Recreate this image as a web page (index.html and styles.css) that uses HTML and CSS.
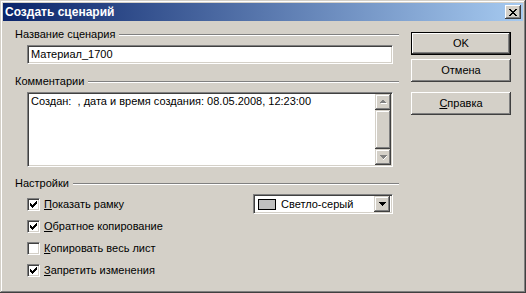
FILE: index.html
```html
<!DOCTYPE html>
<html lang="ru">
<head>
    <meta charset="UTF-8">
    <title>Создать сценарий</title>
    <link rel="stylesheet" href="styles.css">
</head>
<body>
    <div class="window">
        <div class="titlebar">
            <span class="title">Создать сценарий</span>
            <div class="close">
                <svg width="8" height="7" viewBox="0 0 8 7" shape-rendering="crispEdges">
                    <path d="M0 0h2v1H0zM6 0h2v1H6zM1 1h2v1H1zM5 1h2v1H5zM2 2h4v1H2zM3 3h2v1H3zM2 4h4v1H2zM1 5h2v1H1zM5 5h2v1H5zM0 6h2v1H0zM6 6h2v1H6z" fill="#000"/>
                </svg>
            </div>
        </div>

        <div class="content">
            <div class="main">
                <div class="group-head"><span>Название сценария</span><i class="rule"></i></div>
                <div class="edit">Материал_1700</div>

                <div class="group-head second"><span>Комментарии</span><i class="rule"></i></div>
                <div class="memo">
                    <div class="memo-text">Создан:  , дата и время создания: 08.05.2008, 12:23:00</div>
                    <div class="vscroll">
                        <div class="sbtn">
                            <svg width="7" height="5" viewBox="0 0 7 5" shape-rendering="crispEdges">
                                <path d="M4 1h1v1h1v1h1v1H1V3h1V2h1V1z" fill="#fff"/>
                                <path d="M3 0h1v1h1v1h1v1H0V2h1V1h1V0z" fill="#808080"/>
                            </svg>
                        </div>
                        <div class="sthumb"></div>
                        <div class="sbtn">
                            <svg width="7" height="5" viewBox="0 0 7 5" shape-rendering="crispEdges">
                                <path d="M1 1h6v1H6v1H5v1H4v1H3V1z" fill="#fff"/>
                                <path d="M0 0h7v1H6v1H5v1H4v1H3V3H2V2H1V1H0z" fill="#808080"/>
                            </svg>
                        </div>
                    </div>
                </div>

                <div class="group-head third"><span>Настройки</span><i class="rule"></i></div>
                <div class="options">
                    <div class="opt-row first">
                        <div class="check">
                            <span class="box">
                                <svg width="7" height="7" viewBox="0 0 7 7" shape-rendering="crispEdges"><path d="M0 2h1v3H0zM1 3h1v3H1zM2 4h1v3H2zM3 3h1v3H3zM4 2h1v3H4zM5 1h1v3H5zM6 0h1v3H6z" fill="#000"/></svg>
                            </span>
                            <span><u>П</u>оказать рамку</span>
                        </div>
                        <div class="combo">
                            <span class="swatch"></span>
                            <span class="combo-text">Светло-серый</span>
                            <span class="combo-btn">
                                <svg width="7" height="4" viewBox="0 0 7 4" shape-rendering="crispEdges"><path d="M0 0h7v1H6v1H5v1H4v1H3V3H2V2H1V1H0z" fill="#000"/></svg>
                            </span>
                        </div>
                    </div>
                    <div class="opt-row">
                        <div class="check">
                            <span class="box">
                                <svg width="7" height="7" viewBox="0 0 7 7" shape-rendering="crispEdges"><path d="M0 2h1v3H0zM1 3h1v3H1zM2 4h1v3H2zM3 3h1v3H3zM4 2h1v3H4zM5 1h1v3H5zM6 0h1v3H6z" fill="#000"/></svg>
                            </span>
                            <span><u>О</u>братное копирование</span>
                        </div>
                    </div>
                    <div class="opt-row">
                        <div class="check">
                            <span class="box"></span>
                            <span><u>К</u>опировать весь лист</span>
                        </div>
                    </div>
                    <div class="opt-row">
                        <div class="check">
                            <span class="box">
                                <svg width="7" height="7" viewBox="0 0 7 7" shape-rendering="crispEdges"><path d="M0 2h1v3H0zM1 3h1v3H1zM2 4h1v3H2zM3 3h1v3H3zM4 2h1v3H4zM5 1h1v3H5zM6 0h1v3H6z" fill="#000"/></svg>
                            </span>
                            <span><u>З</u>апретить изменения</span>
                        </div>
                    </div>
                </div>
            </div>

            <div class="side">
                <div class="btn default">OK</div>
                <div class="btn">Отмена</div>
                <div class="btn help"><u>С</u>правка</div>
            </div>
        </div>
    </div>
</body>
</html>
```

FILE: styles.css
```css
* {
    margin: 0;
    padding: 0;
    box-sizing: border-box;
}

body {
    font-family: 'Liberation Sans', Arial, sans-serif;
    font-size: 11px;
    line-height: 13px;
    color: #000;
    background-color: #d4d0c8;
}

.window {
    width: 526px;
    height: 293px;
    padding: 3px;
    background-color: #d4d0c8;
    box-shadow: inset -1px -1px #404040, inset 1px 1px #d4d0c8,
                inset -2px -2px #808080, inset 2px 2px #fff;
}

/* title bar */

.titlebar {
    height: 18px;
    display: flex;
    align-items: center;
    justify-content: space-between;
    padding: 0 2px;
    background: linear-gradient(to right, #0a246a, #a6caf0);
}

.title {
    color: #fff;
    font-weight: bold;
    font-size: 12px;
}

.close {
    width: 16px;
    height: 14px;
    display: flex;
    align-items: center;
    justify-content: center;
    background-color: #d4d0c8;
    box-shadow: inset -1px -1px #404040, inset 1px 1px #fff,
                inset -2px -2px #808080;
}

/* body */

.content {
    display: flex;
    padding-top: 7px;
}

.main {
    width: 384px;
    margin-left: 12px;
}

.side {
    width: 100px;
    margin-left: 12px;
    padding-top: 4px;
    display: flex;
    flex-direction: column;
}

.group-head {
    display: flex;
    align-items: center;
    height: 13px;
}

.group-head .rule {
    flex: 1;
    height: 2px;
    margin-left: 4px;
    margin-top: 1px;
    border-top: 1px solid #808080;
    border-bottom: 1px solid #fff;
}

.group-head.second {
    margin-top: 11px;
}

.group-head.third {
    margin-top: 10px;
}

.edit,
.memo,
.combo {
    background-color: #fff;
    border: 1px solid;
    border-color: #808080 #fff #fff #808080;
    box-shadow: inset 1px 1px #404040, inset -1px -1px #d4d0c8;
}

.edit {
    width: 366px;
    height: 19px;
    margin: 4px 0 0 12px;
    padding: 2px 3px;
}

.memo {
    width: 366px;
    height: 75px;
    margin: 4px 0 0 12px;
    padding: 1px;
    display: flex;
}

.memo-text {
    flex: 1;
    padding: 1px 2px;
    white-space: pre;
}

.vscroll {
    width: 16px;
    display: flex;
    flex-direction: column;
}

.sbtn,
.sthumb,
.combo-btn {
    background-color: #d4d0c8;
    box-shadow: inset -1px -1px #404040, inset 1px 1px #d4d0c8,
                inset -2px -2px #808080, inset 2px 2px #fff;
}

.sbtn {
    height: 16px;
    display: flex;
    align-items: center;
    justify-content: center;
}

.sthumb {
    flex: 1;
}

/* options */

.options {
    margin: 2px 0 0 12px;
    width: 366px;
}

.opt-row {
    height: 22px;
    display: flex;
    align-items: center;
    justify-content: space-between;
}

.opt-row.first {
    height: 23px;
    padding-top: 1px;
}

.check {
    display: flex;
    align-items: center;
}

.box {
    width: 13px;
    height: 13px;
    margin-right: 4px;
    display: flex;
    align-items: center;
    justify-content: center;
    background-color: #fff;
    border: 1px solid;
    border-color: #808080 #fff #fff #808080;
    box-shadow: inset 1px 1px #404040, inset -1px -1px #d4d0c8;
}

.combo {
    width: 140px;
    height: 20px;
    padding: 2px;
    display: flex;
    align-items: center;
}

.swatch {
    width: 18px;
    height: 11px;
    margin-left: 2px;
    border: 1px solid #000;
    background-color: #c0c0c0;
}

.combo-text {
    flex: 1;
    margin-left: 5px;
}

.combo-btn {
    width: 16px;
    height: 16px;
    display: flex;
    align-items: center;
    justify-content: center;
}

/* buttons */

.btn {
    height: 23px;
    margin-bottom: 4px;
    display: flex;
    align-items: center;
    justify-content: center;
    background-color: #d4d0c8;
    box-shadow: inset -1px -1px #404040, inset 1px 1px #fff,
                inset -2px -2px #808080, inset 2px 2px #d4d0c8;
}

.btn.default {
    border: 1px solid #000;
    box-shadow: inset -1px -1px #404040, inset 1px 1px #fff,
                inset -2px -2px #808080;
}

.btn.help {
    margin-top: 6px;
}
```
